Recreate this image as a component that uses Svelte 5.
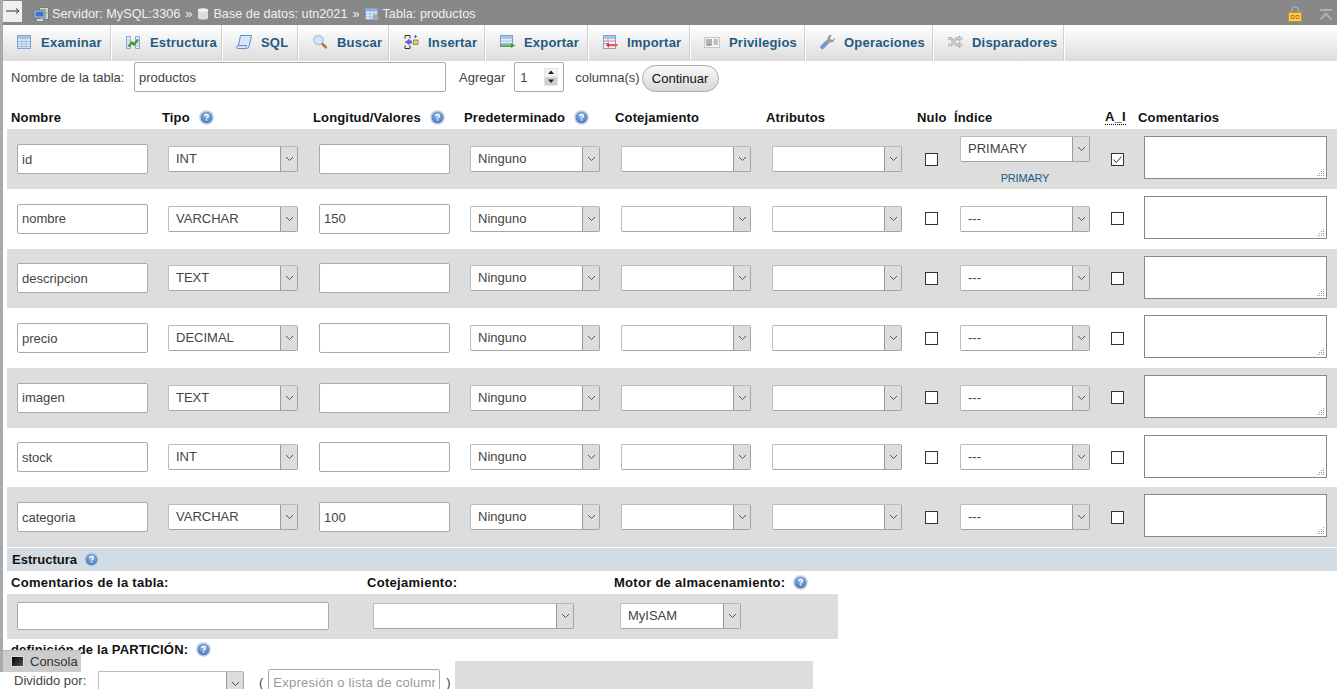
<script>
	const tabs = [
		{ label: 'Examinar', w: 109, icon: 'browse' },
		{ label: 'Estructura', w: 111, icon: 'structure' },
		{ label: 'SQL', w: 76, icon: 'sql' },
		{ label: 'Buscar', w: 91, icon: 'search' },
		{ label: 'Insertar', w: 96, icon: 'insert' },
		{ label: 'Exportar', w: 103, icon: 'export' },
		{ label: 'Importar', w: 102, icon: 'import' },
		{ label: 'Privilegios', w: 115, icon: 'priv' },
		{ label: 'Operaciones', w: 128, icon: 'ops' },
		{ label: 'Disparadores', w: 131, icon: 'triggers' }
	];

	const columns = [
		{ name: 'id', type: 'INT', len: '', index: 'PRIMARY', ai: true },
		{ name: 'nombre', type: 'VARCHAR', len: '150', index: '---' },
		{ name: 'descripcion', type: 'TEXT', len: '', index: '---' },
		{ name: 'precio', type: 'DECIMAL', len: '', index: '---' },
		{ name: 'imagen', type: 'TEXT', len: '', index: '---' },
		{ name: 'stock', type: 'INT', len: '', index: '---' },
		{ name: 'categoria', type: 'VARCHAR', len: '100', index: '---' }
	];
</script>

{#snippet help()}
	<svg class="help" width="15" height="15" viewBox="0 0 15 15">
		<defs>
			<radialGradient id="hg" cx="0.5" cy="0.35" r="0.7">
				<stop offset="0" stop-color="#9dbde8" />
				<stop offset="1" stop-color="#3c6fb4" />
			</radialGradient>
		</defs>
		<circle cx="7.5" cy="7.5" r="7.3" fill="#bcd0ea" />
		<circle cx="7.5" cy="7.5" r="5.8" fill="url(#hg)" />
		<path d="M5.6 6.1c0-1 .9-1.6 1.9-1.6s1.9.6 1.9 1.5c0 1.2-1.9 1.2-1.9 2.5" fill="none" stroke="#fff" stroke-width="1.3" />
		<rect x="6.9" y="9.4" width="1.3" height="1.3" fill="#fff" />
	</svg>
{/snippet}

{#snippet select(value, cls)}
	<div class="select {cls}">
		<span class="sel-value">{value}</span>
		<span class="sel-btn">
			<svg width="9" height="6" viewBox="0 0 9 6"><path d="M1 1l3.5 3.5L8 1" fill="none" stroke="#555" /></svg>
		</span>
	</div>
{/snippet}

{#snippet tabIcon(name)}
	<svg class="tab-icon" width="16" height="16" viewBox="0 0 16 16">
		{#if name === 'browse'}
			<rect x="1.5" y="1.5" width="13" height="13" fill="#e6eef8" stroke="#7fa3cf" />
			<rect x="2" y="2" width="12" height="3" fill="#a9c4e6" />
			<path d="M2 7.500h12M2 10h12M2 12.500h12M6 5v9M10 5v9" stroke="#9dbbe0" fill="none" />
		{:else if name === 'structure'}
			<path d="M1.500 2.500h4v12h-4zM10.500 2.500h4v12h-4z" fill="#e6eef8" stroke="#86a8cf" />
			<path d="M1.500 6h4M1.500 9h4M1.500 12h4M10.500 6h4M10.500 9h4M10.500 12h4" stroke="#a9c3e0" />
			<path d="M3.500 12.500l3.500-4 2 2 4-5" fill="none" stroke="#3f9a2c" stroke-width="2.2" />
		{:else if name === 'sql'}
			<path d="M4.500 1.500H15.500L13 12.500Q12.500 14.500 10.500 14.500H1.500Q.5 14.500 1 13L1.500 11.500H2.500z" fill="#d9e6f6" stroke="#5f8fc6" />
			<path d="M2.500 11.500H10.500L10 13.500" fill="none" stroke="#5f8fc6" />
		{:else if name === 'search'}
			<circle cx="6.500" cy="6" r="4.500" fill="#d5e6f8" stroke="#a9c4e0" stroke-width="1.5" />
			<path d="M10 9.500l4.500 4.500" stroke="#b5763a" stroke-width="2.5" />
		{:else if name === 'insert'}
			<path d="M2 1.500h5M2 14.500h5M2 1.500v3M7 1.500v3M2 14.500v-3M7 14.500v-3M2 8h5" stroke="#333" fill="none" />
			<path d="M2.500 8l4-3.500v2h2.500v3H6.500v2z" fill="#6a5bd6" />
			<rect x="10.500" y="6" width="4.500" height="4.500" fill="#f5d33a" stroke="#555" stroke-width=".6" />
			<path d="M12.500 1v3M11 2.500h3" stroke="#6a5bd6" />
		{:else if name === 'export'}
			<rect x="1.500" y="1.500" width="12" height="11" fill="#e8eff8" stroke="#7fa3cf" />
			<rect x="2" y="2" width="11" height="3" fill="#a9c4e6" />
			<path d="M2 7h11M2 9.500h11" stroke="#9dbbe0" />
			<path d="M1 11h11.500M1 12h11.500" stroke="#3f9a2c" />
			<path d="M12 9l4 2.500-4 2.500z" fill="#3f9a2c" />
		{:else if name === 'import'}
			<rect x="1.500" y="1.500" width="12" height="13" fill="#eef3fa" stroke="#7fa3cf" />
			<rect x="2" y="2" width="11" height="3" fill="#a9c4e6" />
			<path d="M2 7h11M2 9.500h5M6 5v3" stroke="#d38a8a" />
			<path d="M7 10h8.500v2.200H7z" fill="#e9595b" />
			<path d="M7 8.500l-3 2.600 3 2.600z" fill="#d92f2f" />
		{:else if name === 'priv'}
			<rect x="0.500" y="3.500" width="15" height="10" fill="#f6f6f6" stroke="#c5c5c5" />
			<rect x="2" y="5" width="6" height="6.500" fill="#8fb8ea" />
			<circle cx="5" cy="7" r="2" fill="#eca868" />
			<path d="M2.500 11.500q2.500-4 5 0z" fill="#de7c3c" />
			<path d="M9.500 6h4.500M9.500 8h4.500M9.500 10h4.500" stroke="#8a8a8a" />
		{:else if name === 'ops'}
			<path d="M2 14.500q-1.500-1.500 0-3L8.500 5.500q-.5-2.500 1.500-4 1.500-1 3-.5L11 3.500l.5 2 2 .5L15.500 3.800q.5 2-.8 3.500-1.500 1.500-3.700 1L4.500 14.500q-1.300 1.300-2.500 0z" fill="#9a9a9a" />
			<path d="M2 14.500q-1.500-1.500 0-3l4.500-4.200 2.800 2.500-4.800 4.700q-1.300 1.300-2.500 0z" fill="#6d9ad6" />
		{:else}
			<path d="M1 4.500h3l5.500 6.500h3M1 11h3l5.500-6.500h3" fill="none" stroke="#a5a5a5" stroke-width="2.4" />
			<path d="M1 4.500h3l5.500 6.500h3M1 11h3l5.500-6.500h3" fill="none" stroke="#f2f2f2" stroke-width=".8" />
			<path d="M12 2l3.500 2.500L12 7zM12 8.500l3.500 2.500L12 13.500z" fill="#e8e8e8" stroke="#9a9a9a" stroke-width=".8" />
		{/if}
	</svg>
{/snippet}

<div class="page">
	<header class="topbar">
		<button class="collapse">
			<svg width="14" height="8" viewBox="0 0 14 8"><path d="M0 4h12.500M10 1.500L13 4l-3 2.500" fill="none" stroke="#333" /></svg>
		</button>
		<svg class="crumb-icon first" width="17" height="16" viewBox="0 0 17 16">
			<rect x="6.500" y="1.500" width="9" height="12" fill="#d4d4d4" stroke="#7a7a7a" />
			<rect x="1" y="4" width="11" height="8" fill="#bcc7d2" stroke="#6a747e" />
			<rect x="2.500" y="5.500" width="8" height="5" fill="#2f7ad0" />
			<path d="M4 14h6" stroke="#d8d8d8" stroke-width="2" />
			<rect x="13" y="6" width="1.500" height="1.500" fill="#5fd85f" />
		</svg>
		<span class="crumb">Servidor: MySQL:3306</span>
		<span class="sep">»</span>
		<svg class="crumb-icon" width="12" height="14" viewBox="0 0 12 14">
			<path d="M1 3v8c0 2 10 2 10 0V3z" fill="#dcdcdc" />
			<ellipse cx="6" cy="3" rx="5" ry="1.800" fill="#f4f4f4" />
		</svg>
		<span class="crumb">Base de datos: utn2021</span>
		<span class="sep">»</span>
		<svg class="crumb-icon" width="14" height="14" viewBox="0 0 14 14">
			<rect x="0.500" y="1.500" width="12" height="11" fill="#e6eef8" stroke="#7fa3cf" />
			<rect x="1" y="2" width="11" height="2.500" fill="#8fb2de" />
			<path d="M1 7h11M1 10h11M5 4v9M9 4v9" stroke="#9dbbe0" />
			<circle cx="10.500" cy="10.500" r="3" fill="#a8a8a8" />
		</svg>
		<span class="crumb">Tabla: productos</span>
		<div class="top-right">
			<svg width="14" height="16" viewBox="0 0 14 16">
				<path d="M3.500 7V4.500a3.500 3.500 0 0 1 7 0V7" fill="none" stroke="#a9a9a9" stroke-width="1.6" />
				<rect x=".5" y="6.500" width="13" height="9" fill="#f6cf62" stroke="#c98f20" />
				<path d="M3 9.500h3v3H3zM8 9.500h3v3H8z" fill="none" stroke="#b87c16" />
			</svg>
			<svg width="12" height="11" viewBox="0 0 12 11">
				<path d="M0 1h12" stroke="#b0b0b0" stroke-width="2" />
				<path d="M.7 10.500L6 4.500l5.300 6" fill="none" stroke="#b0b0b0" stroke-width="2" />
			</svg>
		</div>
	</header>

	<nav class="tabs">
		{#each tabs as tab}
			<a class="tab" style="width: {tab.w}px" href="#top">
				{@render tabIcon(tab.icon)}
				<span>{tab.label}</span>
			</a>
		{/each}
	</nav>

	<div class="name-row">
		<label for="tbl">Nombre de la tabla:</label>
		<input id="tbl" class="tbl-input" value="productos" />
		<span class="agregar">Agregar</span>
		<div class="num">
			<span>1</span>
			<span class="spin">
				<svg width="14" height="18" viewBox="0 0 14 18">
					<rect width="14" height="18" fill="#e4e4e4" />
					<rect x="1" y="1" width="12" height="7.500" fill="#f4f4f4" />
					<rect x="1" y="9.500" width="12" height="7.500" fill="#cfcfcf" />
					<path d="M7 2.500l3 3.500H4zM7 15l3-3.500H4z" fill="#222" />
				</svg>
			</span>
		</div>
		<span class="cols">columna(s)</span>
		<button class="go">Continuar</button>
	</div>

	<div class="grid head">
		<div>Nombre</div>
		<div>Tipo {@render help()}</div>
		<div>Longitud/Valores {@render help()}</div>
		<div>Predeterminado {@render help()}</div>
		<div>Cotejamiento</div>
		<div>Atributos</div>
		<div>Nulo</div>
		<div>Índice</div>
		<div><span class="dotted">A_I</span></div>
		<div>Comentarios</div>
	</div>

	{#each columns as col, i}
		<div class="grid row" class:odd={i % 2 === 0}>
			<div class="cell"><input class="text" value={col.name} /></div>
			<div class="cell">{@render select(col.type, 'w130')}</div>
			<div class="cell"><input class="text" value={col.len} /></div>
			<div class="cell">{@render select('Ninguno', 'w130')}</div>
			<div class="cell">{@render select('', 'w130')}</div>
			<div class="cell">{@render select('', 'w130')}</div>
			<div class="check-cell nulo"><span class="check"></span></div>
			<div class="cell index" class:top={col.index === 'PRIMARY'}>
				{@render select(col.index, 'w130')}
				{#if col.index === 'PRIMARY'}
					<a class="primary" href="#top">PRIMARY</a>
				{/if}
			</div>
			<div class="check-cell ai">
				<span class="check">
					{#if col.ai}
						<svg width="11" height="11" viewBox="0 0 11 11"><path d="M1.500 5.500l2.800 3L9.500 2.500" fill="none" stroke="#333" /></svg>
					{/if}
				</span>
			</div>
			<div class="cell comment">
				<div class="area">
					<svg class="grip" width="9" height="9" viewBox="0 0 9 9">
						<path d="M7 1h1v1H7zM5 3h1v1H5zM7 3h1v1H7zM3 5h1v1H3zM5 5h1v1H5zM7 5h1v1H7zM1 7h1v1H1zM3 7h1v1H3zM5 7h1v1H5zM7 7h1v1H7z" fill="#999" />
					</svg>
				</div>
			</div>
		</div>
	{/each}

	<div class="band">Estructura {@render help()}</div>

	<div class="options">
		<div class="opt-head">
			<div>Comentarios de la tabla:</div>
			<div>Cotejamiento:</div>
			<div>Motor de almacenamiento: {@render help()}</div>
		</div>
		<div class="opt-body">
			<div><input class="text wide" /></div>
			<div>{@render select('', 'w201')}</div>
			<div>{@render select('MyISAM', 'w121')}</div>
		</div>
	</div>

	<div class="part-label">definición de la PARTICIÓN: {@render help()}</div>
	<div class="part-row">
		<div class="part-cell">
			<span class="part-by">Dividido por:</span>
			{@render select('', 'w146')}
			<span class="paren">(</span>
			<input class="text expr" placeholder="Expresión o lista de columnas" />
			<span class="paren">)</span>
		</div>
	</div>

	<div class="strip"></div>
	<div class="console">
		<span class="console-icon"></span>
		Consola
	</div>
</div>

<style>
	:global(body) {
		margin: 0;
		overflow: hidden;
		background: #fff;
	}

	.page {
		position: relative;
		height: 689px;
		overflow: hidden;
		font-family: 'Liberation Sans', Arial, sans-serif;
		font-size: 13px;
		color: #444;
	}

	.strip {
		position: absolute;
		left: 0;
		top: 0;
		width: 3px;
		height: 672px;
		background: #aaa;
	}

	.topbar {
		display: flex;
		align-items: center;
		height: 25px;
		box-sizing: border-box;
		padding-left: 3px;
		background: #888;
		color: #f0f0f0;
		font-size: 12.7px;
	}

	.collapse {
		width: 19px;
		height: 21px;
		padding: 0;
		margin: -3px 11px 0 0;
		border: 0;
		background: #f0f0f0;
		display: flex;
		align-items: center;
		justify-content: center;
	}

	.crumb-icon {
		margin: 2px 4px 0 0;
	}
	.crumb-icon.first {
		margin-right: 2px;
	}
	.crumb {
		margin-top: 2px;
		white-space: nowrap;
	}
	.sep {
		margin: 2px 5px 0;
	}

	.top-right {
		margin-left: auto;
		display: flex;
		align-items: center;
		gap: 18px;
		padding: 3px 5px 0 0;
	}

	.tabs {
		display: flex;
		height: 36px;
		padding-left: 3px;
		background: linear-gradient(#fff, #dcdcdc);
	}

	.tab {
		display: flex;
		align-items: center;
		box-sizing: border-box;
		height: 36px;
		padding: 0 0 2px 13px;
		border-right: 1px solid #fff;
		box-shadow: inset -1px 0 0 #d0d0d0;
		color: #235a81;
		font-weight: bold;
		letter-spacing: 0.2px;
		text-decoration: none;
		white-space: nowrap;
	}

	.tab:first-child {
		letter-spacing: 0.3px;
	}

	.tab-icon {
		margin-right: 9px;
		flex: none;
	}

	.name-row {
		display: flex;
		align-items: center;
		height: 31px;
		padding: 1px 0 0 11px;
		box-sizing: border-box;
		margin-bottom: 16px;
	}

	.name-row label {
		width: 123px;
	}

	.tbl-input,
	.text {
		box-sizing: border-box;
		border: 1px solid #aaa;
		border-radius: 2px;
		background: #fff;
		font: inherit;
		color: #444;
		padding: 0 4px;
		outline: none;
	}

	.tbl-input {
		width: 312px;
		height: 30px;
	}

	.agregar {
		margin-left: 13px;
	}

	.num {
		display: flex;
		align-items: center;
		justify-content: space-between;
		box-sizing: border-box;
		width: 50px;
		height: 30px;
		margin-left: 9px;
		padding: 0 5px;
		border: 1px solid #aaa;
		border-radius: 2px;
		color: #444;
	}

	.spin {
		display: flex;
	}

	.cols {
		margin-left: 11px;
	}

	.go {
		width: 77px;
		height: 27px;
		margin: 2px 0 0 2px;
		padding: 0;
		border: 1px solid #aaa;
		border-radius: 14px;
		background: linear-gradient(#f8f8f8, #d8d8d8);
		font: inherit;
		color: #111;
	}

	.grid {
		display: grid;
		grid-template-columns: 151px 151px 151px 151px 151px 151px 37px 151px 33px 203px;
		margin-left: 7px;
	}

	.head {
		align-items: center;
		height: 21.35px;
		color: #111;
		font-weight: bold;
		letter-spacing: 0.15px;
		box-sizing: border-box;
		padding-bottom: 2px;
	}

	.head > div {
		display: flex;
		align-items: center;
		gap: 9px;
		padding-left: 4px;
	}

	.dotted {
		border-bottom: 1px dotted #000;
		line-height: 14px;
	}

	.help {
		flex: none;
	}

	.row {
		height: 59.67px;
		align-items: center;
	}

	.row.odd {
		background: #ddd;
	}

	.cell {
		padding-left: 10px;
		display: flex;
		align-items: center;
	}

	.cell .text {
		width: 131px;
		height: 30px;
	}

	.select {
		display: flex;
		box-sizing: border-box;
		height: 26px;
		background: #fff;
		border: 1px solid #bbb;
		border-right-color: #a5a5a5;
		border-bottom-color: #a5a5a5;
		border-radius: 2px;
		flex: none;
	}

	.w130 {
		width: 130px;
	}
	.w201 {
		width: 201px;
	}
	.w121 {
		width: 121px;
	}
	.w146 {
		width: 146px;
		margin-top: 2px;
	}

	.sel-value {
		flex: 1;
		padding-left: 7px;
		line-height: 24px;
		white-space: nowrap;
	}

	.sel-btn {
		display: flex;
		align-items: center;
		justify-content: center;
		width: 16px;
		background: #ddd;
		border-left: 1px solid #999;
	}

	.check-cell {
		display: flex;
	}

	.nulo {
		padding-left: 12px;
	}

	.ai {
		padding-left: 10px;
	}

	.check {
		display: flex;
		align-items: center;
		justify-content: center;
		box-sizing: border-box;
		width: 13px;
		height: 13px;
		border: 1px solid #333;
		background: #fff;
	}

	.index {
		flex-direction: column;
		align-items: flex-start;
	}

	.index.top {
		align-self: start;
		padding-top: 7px;
	}

	.primary {
		width: 130px;
		margin-top: 10px;
		text-align: center;
		font-size: 11px;
		letter-spacing: -0.2px;
		color: #235a81;
		text-decoration: none;
	}

	.comment {
		align-self: start;
		padding-top: 7px;
	}

	.area {
		position: relative;
		box-sizing: border-box;
		width: 183px;
		height: 43px;
		border: 1px solid #888;
		background: #fff;
	}

	.grip {
		position: absolute;
		right: 1px;
		bottom: 1px;
	}

	.band {
		display: flex;
		align-items: center;
		gap: 7px;
		height: 23px;
		margin: 1px 0 0 7px;
		padding-left: 5px;
		background: #d3dce3;
		color: #111;
		font-weight: bold;
	}

	.options {
		width: 831px;
		margin-left: 7px;
	}

	.opt-head,
	.opt-body {
		display: grid;
		grid-template-columns: 356px 247px 228px;
	}

	.opt-head {
		height: 23px;
		align-items: center;
		color: #111;
		font-weight: bold;
		letter-spacing: 0.28px;
	}

	.opt-head > div {
		display: flex;
		align-items: center;
		gap: 8px;
		padding-left: 4px;
	}

	.opt-body {
		height: 45px;
		background: #ddd;
		align-items: center;
	}

	.opt-body > div {
		padding-left: 10px;
	}

	.text.wide {
		display: block;
		width: 312px;
		height: 28px;
	}

	.part-label {
		display: flex;
		align-items: center;
		gap: 8px;
		height: 22px;
		padding-left: 11px;
		color: #111;
		font-weight: bold;
		letter-spacing: 0.15px;
	}

	.part-row {
		width: 806px;
		height: 40px;
		margin-left: 7px;
		background: #ddd;
	}

	.part-cell {
		display: flex;
		align-items: flex-start;
		box-sizing: border-box;
		width: 448px;
		height: 40px;
		padding: 8px 0 0 7px;
		background: #fff;
	}

	.part-by {
		flex: none;
		width: 84px;
		line-height: 24px;
		white-space: nowrap;
	}

	.paren {
		margin: 4px 5px 0 15px;
		line-height: 20px;
	}

	.paren:last-child {
		margin-left: 6px;
	}

	.text.expr {
		width: 172px;
		height: 28px;
		margin: 0;
	}

	.text.expr::placeholder {
		color: #999;
		opacity: 1;
		letter-spacing: 0.25px;
	}

	.console {
		position: absolute;
		left: 3px;
		top: 650px;
		display: flex;
		align-items: center;
		gap: 6px;
		box-sizing: border-box;
		width: 78px;
		height: 22px;
		padding-left: 8px;
		background: #ccc;
		border-top: 1px solid #bbb;
		color: #333;
		white-space: nowrap;
	}

	.console-icon {
		width: 13px;
		height: 11px;
		background: linear-gradient(135deg, #000, #555);
		border: 1px solid #ddd;
		box-sizing: border-box;
	}
</style>
